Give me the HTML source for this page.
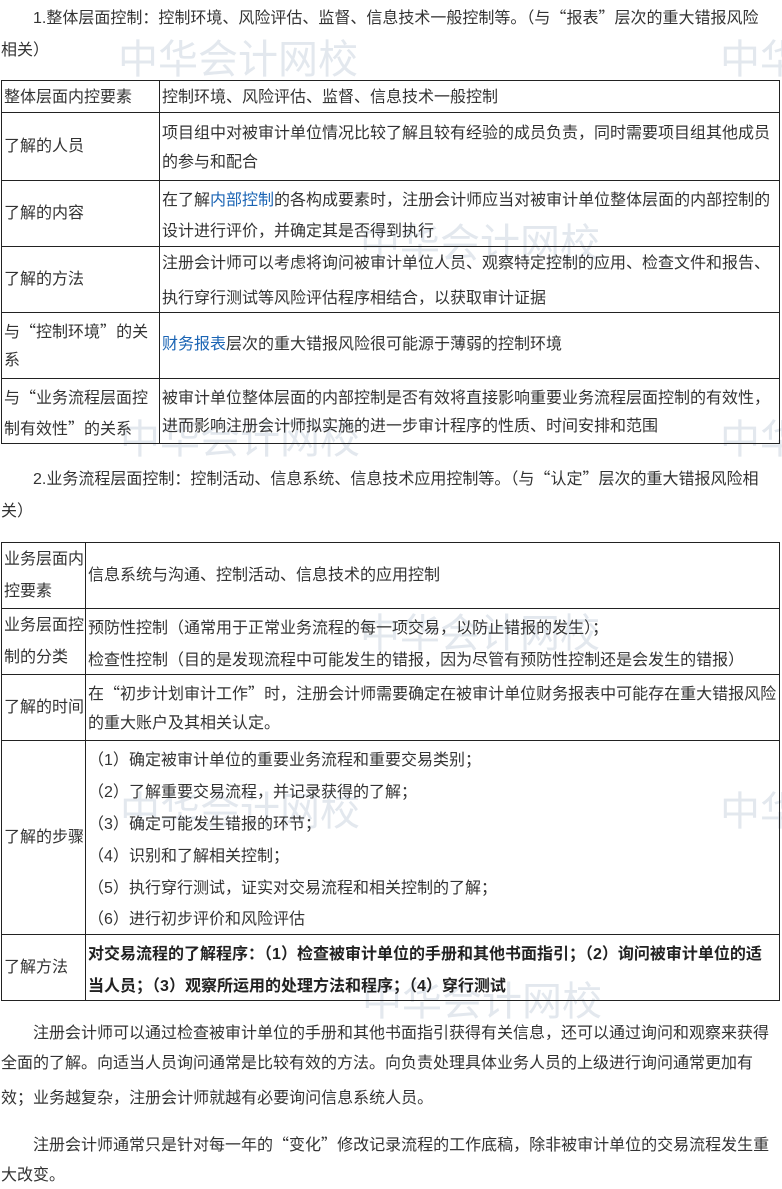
<!DOCTYPE html>
<html><head><meta charset="utf-8"><style>
body{margin:0;background:#fff;width:782px;height:1189px;position:relative;overflow:hidden;font-family:"Liberation Sans","Noto Sans CJK SC",sans-serif;font-size:16px;color:#333}
.t{position:absolute;white-space:nowrap;line-height:20px}
.b{position:absolute;border:1px solid #222;box-sizing:border-box}
.h{position:absolute;height:1px;background:#222}
.v{position:absolute;width:1px;background:#222}
.w{position:absolute;white-space:nowrap;color:#e3e8ee;font-size:40px;line-height:44px}
.q{font-family:"Noto Sans CJK SC",sans-serif}
a{color:#1a64b4;text-decoration:none}
strong{font-weight:bold;color:#222}
</style></head><body>
<div class="w" style="left:118px;top:38px">中华会计网校</div>
<div class="w" style="left:720px;top:38px">中华</div>
<div class="w" style="left:360px;top:222px">中华会计网校</div>
<div class="w" style="left:120px;top:418px">中华会计网校</div>
<div class="w" style="left:720px;top:418px">中华</div>
<div class="w" style="left:360px;top:612px">中华会计网校</div>
<div class="w" style="left:120px;top:790px">中华会计网校</div>
<div class="w" style="left:720px;top:790px">中华</div>
<div class="w" style="left:362px;top:980px">中华会计网校</div>

<div class="t" style="left:33px;top:6px">1.整体层面控制<span class="q">：</span>控制环境、风险评估、监督、信息技术一般控制等。<span class="q">（</span>与<span class="q">“</span>报表<span class="q">”</span>层次的重大错报风险</div>
<div class="t" style="left:1px;top:38px">相关<span class="q">）</span></div>

<div class="b" style="left:1px;top:80px;width:779px;height:364px"></div>
<div class="v" style="left:159px;top:80px;height:364px"></div>
<div class="h" style="left:1px;top:112px;width:779px"></div>
<div class="h" style="left:1px;top:180px;width:779px"></div>
<div class="h" style="left:1px;top:246px;width:779px"></div>
<div class="h" style="left:1px;top:312px;width:779px"></div>
<div class="h" style="left:1px;top:378px;width:779px"></div>
<div class="t" style="left:4px;top:88px">整体层面内控要素</div>
<div class="t" style="left:162px;top:88px">控制环境、风险评估、监督、信息技术一般控制</div>
<div class="t" style="left:4px;top:137px">了解的人员</div>
<div class="t" style="left:162px;top:121px">项目组中对被审计单位情况比较了解且较有经验的成员负责<span class="q">，</span>同时需要项目组其他成员</div>
<div class="t" style="left:162px;top:153px">的参与和配合</div>
<div class="t" style="left:4px;top:204px">了解的内容</div>
<div class="t" style="left:162px;top:188px">在了解<a>内部控制</a>的各构成要素时<span class="q">，</span>注册会计师应当对被审计单位整体层面的内部控制的</div>
<div class="t" style="left:162px;top:219px">设计进行评价<span class="q">，</span>并确定其是否得到执行</div>
<div class="t" style="left:4px;top:270px">了解的方法</div>
<div class="t" style="left:162px;top:254px">注册会计师可以考虑将询问被审计单位人员、观察特定控制的应用、检查文件和报告、</div>
<div class="t" style="left:162px;top:286px">执行穿行测试等风险评估程序相结合<span class="q">，</span>以获取审计证据</div>
<div class="t" style="left:4px;top:320px">与<span class="q">“</span>控制环境<span class="q">”</span>的关</div>
<div class="t" style="left:4px;top:351px">系</div>
<div class="t" style="left:162px;top:335px"><a>财务报表</a>层次的重大错报风险很可能源于薄弱的控制环境</div>
<div class="t" style="left:4px;top:386px">与<span class="q">“</span>业务流程层面控</div>
<div class="t" style="left:4px;top:417px">制有效性<span class="q">”</span>的关系</div>
<div class="t" style="left:162px;top:386px">被审计单位整体层面的内部控制是否有效将直接影响重要业务流程层面控制的有效性<span class="q">，</span></div>
<div class="t" style="left:162px;top:417px">进而影响注册会计师拟实施的进一步审计程序的性质、时间安排和范围</div>

<div class="t" style="left:33px;top:467px">2.业务流程层面控制<span class="q">：</span>控制活动、信息系统、信息技术应用控制等。<span class="q">（</span>与<span class="q">“</span>认定<span class="q">”</span>层次的重大错报风险相</div>
<div class="t" style="left:1px;top:499px">关<span class="q">）</span></div>

<div class="b" style="left:1px;top:542px;width:779px;height:459px"></div>
<div class="v" style="left:85px;top:542px;height:459px"></div>
<div class="h" style="left:1px;top:608px;width:779px"></div>
<div class="h" style="left:1px;top:674px;width:779px"></div>
<div class="h" style="left:1px;top:740px;width:779px"></div>
<div class="h" style="left:1px;top:934px;width:779px"></div>
<div class="t" style="left:4px;top:550px">业务层面内</div>
<div class="t" style="left:4px;top:582px">控要素</div>
<div class="t" style="left:88px;top:566px">信息系统与沟通、控制活动、信息技术的应用控制</div>
<div class="t" style="left:4px;top:616px">业务层面控</div>
<div class="t" style="left:4px;top:648px">制的分类</div>
<div class="t" style="left:88px;top:616px">预防性控制<span class="q">（</span>通常用于正常业务流程的每一项交易<span class="q">，</span>以防止错报的发生<span class="q">）；</span></div>
<div class="t" style="left:88px;top:648px">检查性控制<span class="q">（</span>目的是发现流程中可能发生的错报<span class="q">，</span>因为尽管有预防性控制还是会发生的错报<span class="q">）</span></div>
<div class="t" style="left:4px;top:698px">了解的时间</div>
<div class="t" style="left:88px;top:682px">在<span class="q">“</span>初步计划审计工作<span class="q">”</span>时<span class="q">，</span>注册会计师需要确定在被审计单位财务报表中可能存在重大错报风险</div>
<div class="t" style="left:88px;top:714px">的重大账户及其相关认定。</div>
<div class="t" style="left:4px;top:828px">了解的步骤</div>
<div class="t" style="left:88px;top:748px"><span class="q">（</span>1<span class="q">）</span>确定被审计单位的重要业务流程和重要交易类别<span class="q">；</span></div>
<div class="t" style="left:88px;top:780px"><span class="q">（</span>2<span class="q">）</span>了解重要交易流程<span class="q">，</span>并记录获得的了解<span class="q">；</span></div>
<div class="t" style="left:88px;top:812px"><span class="q">（</span>3<span class="q">）</span>确定可能发生错报的环节<span class="q">；</span></div>
<div class="t" style="left:88px;top:844px"><span class="q">（</span>4<span class="q">）</span>识别和了解相关控制<span class="q">；</span></div>
<div class="t" style="left:88px;top:876px"><span class="q">（</span>5<span class="q">）</span>执行穿行测试<span class="q">，</span>证实对交易流程和相关控制的了解<span class="q">；</span></div>
<div class="t" style="left:88px;top:907px"><span class="q">（</span>6<span class="q">）</span>进行初步评价和风险评估</div>
<div class="t" style="left:4px;top:958px">了解方法</div>
<div class="t" style="left:88px;top:942px"><strong>对交易流程的了解程序<span class="q">：（</span>1<span class="q">）</span>检查被审计单位的手册和其他书面指引<span class="q">；（</span>2<span class="q">）</span>询问被审计单位的适</strong></div>
<div class="t" style="left:88px;top:974px"><strong>当人员<span class="q">；（</span>3<span class="q">）</span>观察所运用的处理方法和程序<span class="q">；（</span>4<span class="q">）</span>穿行测试</strong></div>

<div class="t" style="left:33px;top:1021px">注册会计师可以通过检查被审计单位的手册和其他书面指引获得有关信息<span class="q">，</span>还可以通过询问和观察来获得</div>
<div class="t" style="left:1px;top:1054px">全面的了解。向适当人员询问通常是比较有效的方法。向负责处理具体业务人员的上级进行询问通常更加有</div>
<div class="t" style="left:1px;top:1086px">效<span class="q">；</span>业务越复杂<span class="q">，</span>注册会计师就越有必要询问信息系统人员。</div>
<div class="t" style="left:33px;top:1133px">注册会计师通常只是针对每一年的<span class="q">“</span>变化<span class="q">”</span>修改记录流程的工作底稿<span class="q">，</span>除非被审计单位的交易流程发生重</div>
<div class="t" style="left:1px;top:1166px">大改变。</div>
</body></html>
